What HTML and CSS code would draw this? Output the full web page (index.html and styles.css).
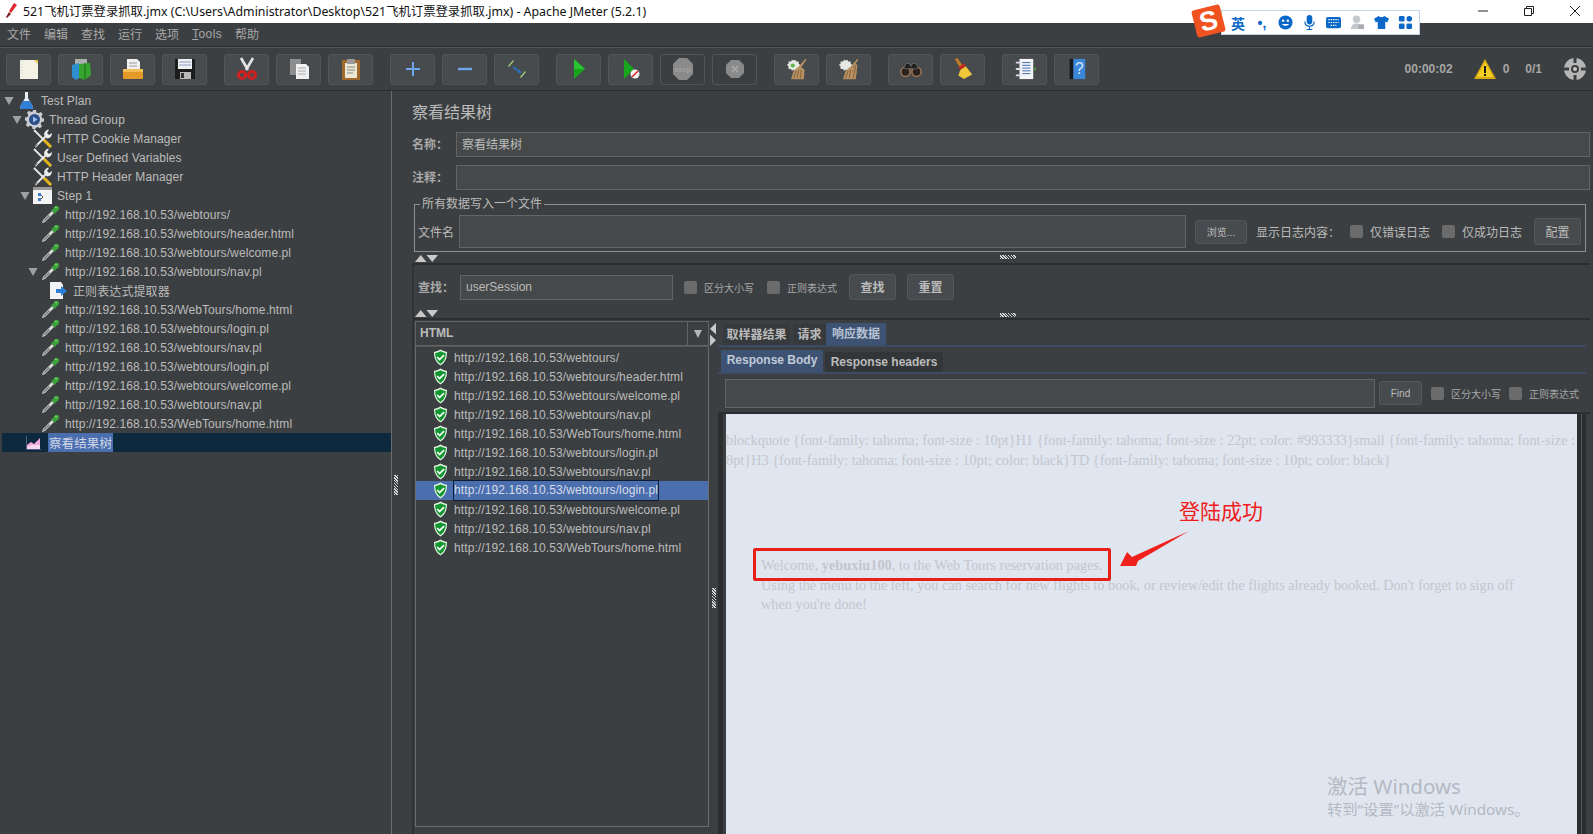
FILE: index.html
```html
<!DOCTYPE html>
<html lang="zh-CN">

<head>
    <meta charset="UTF-8">
    <title>521飞机订票登录抓取.jmx - Apache JMeter (5.2.1)</title>
    <link rel="stylesheet" href="styles.css">
</head>

<body>
    <!-- icons used more than once -->
    <svg class="sprite" aria-hidden="true">
        <symbol id="i-flask" viewBox="0 0 19 19"><path d="M8 1h3v6l5 9q.5 2-1.500 2h-10q-2 0-1.500-2l5-9z" fill="#e8eef5"/><path d="M6 10h7l3 6q.5 2-1.500 2h-10q-2 0-1.500-2z" fill="#2f7fd8"/></symbol>
        <symbol id="i-gear" viewBox="0 0 19 19"><path d="M8 0h3l.5 2.500 2 .8L15.700 2l2 2-1.300 2.200.8 2L19 8.500v3l-2.500.5-.8 2 1.300 2.200-2 2-2.200-1.300-2 .8L10.500 19h-3L7 16.500l-2-.8L2.800 17l-2-2 1.300-2.200-.8-2L0 10.500v-3l2.500-.5.8-2L2 2.800l2-2 2 1.300 2-.8z" fill="#c9ccd2"/><circle cx="9.500" cy="9.500" r="5.500" fill="#2c4f88"/><path d="M8 6.500l4.500 3-4.500 3z" fill="#9cc0ee"/></symbol>
        <symbol id="i-tool" viewBox="0 0 19 19"><path d="M1 1l17 17" stroke="#e8e8e8" stroke-width="1.800"/><path d="M2 18L13 7" stroke="#e8e8e8" stroke-width="2"/><path d="M11 6q0-4 4-5.500l1 .5-2 3 2 2 3-2q0 5-5 5.500z" fill="#ececec"/><path d="M11 11l7 7" stroke="#e2b318" stroke-width="3"/><path d="M1 18.500l3-3" stroke="#111" stroke-width="1"/></symbol>
        <symbol id="i-step" viewBox="0 0 19 19"><rect width="19" height="17" y="1" fill="#f4f4f4"/><rect width="19" height="3" y="1" fill="#9a9a9a"/><path d="M5 7h3v3H5zM5 12h3v3H5z" fill="#3e7cc8"/><path d="M8 9l2 2-2 2" stroke="#555" fill="none"/></symbol>
        <symbol id="i-pipette" viewBox="0 0 19 19"><path d="M1 18l1-3L11 6l2 2-9 9z" fill="#d8dcd8"/><path d="M2 17l1-2 5-5 1 1-5 5z" fill="#777"/><path d="M10 5l2-1 1-2q3-2 4.500-.5T17 6l-2 1-1 2z" fill="#3aa33a"/><path d="M14 2l2 1" stroke="#a6e08a"/></symbol>
        <symbol id="i-regex" viewBox="0 0 19 19"><path d="M1 1h11l2 3v14H1z" fill="#f3f3f3"/><path d="M12 5l6 5-6 5v-3H7V8h5z" fill="#2d7fd6"/></symbol>
        <symbol id="i-chart" viewBox="0 0 16 14"><path d="M1 0v14h15v-1H2V0z" fill="#555c88"/><path d="M2 13V9l4-3 3 2 6-6v11z" fill="#f0a8dc"/><path d="M2 13v-2l5-2 8 0v4z" fill="#f7d8f0"/></symbol>
        <symbol id="i-shield" viewBox="0 0 16 17"><path d="M8 0q3 2 7 2.500 0 10.500-7 14.500Q1 13 1 2.500 5 2 8 0z" fill="#e6f5e4"/><path d="M8 1.700q3 1.500 5.700 2Q13.500 12 8 15.400 2.500 12 2.300 3.700 5 3.200 8 1.700z" fill="#12962f"/><path d="M4.500 8l2.500 2.700L11.800 6" stroke="#fff" stroke-width="1.800" fill="none"/></symbol>
        <symbol id="i-broom" viewBox="0 0 26 26"><path d="M7 2l2 1 2-1 1 2 3 0 0 3 2 1-1 2 0 3-3 0-1 2-3-1-2 1-1-2-3 0 0-3-2-2 2-1 0-3 3 0z" fill="#e6e8e6"/><path d="M23 1l1 1-6 9 4 3-1 11H6l3-10 6-5z" fill="#b89062"/><path d="M9 24l3-9M13 24l2-10M17 24l1-10" stroke="#7c5c38"/></symbol>
    </svg>

    <div class="titlebar">
        <svg class="title-icon" viewBox="0 0 14 16"><path d="M9 0l3 2-6 8-2-2z" fill="#e0282e"/><path d="M4 9l2 2-4 4-1-1z" fill="#7c1c20"/></svg>
        <span class="title-text">521飞机订票登录抓取.jmx (C:\Users\Administrator\Desktop\521飞机订票登录抓取.jmx) - Apache JMeter (5.2.1)</span>
        <div class="window-buttons">
            <svg viewBox="0 0 12 12"><path d="M1 6h10" stroke="#222" fill="none"/></svg>
            <svg viewBox="0 0 12 12"><path d="M1.500 3.500h7v7h-7zM3.500 3.500v-2h7v7h-2" stroke="#222" fill="none"/></svg>
            <svg viewBox="0 0 12 12"><path d="M1 1l10 10M11 1L1 11" stroke="#222" fill="none"/></svg>
        </div>
    </div>

    <div class="menubar">
        <span>文件</span><span>编辑</span><span>查找</span><span>运行</span><span>选项</span><span class="menu-latin"><u>T</u>ools</span><span>帮助</span>
    </div>

    <div class="toolbar">
        <div class="tool-group">
            <button class="tool"><svg viewBox="0 0 22 24"><path d="M2 3h15l3 3v16H2z" fill="#f4f2e4"/><path d="M16 3h4v4z" fill="#e8c84a"/><path d="M4 4v17" stroke="#ccc" stroke-dasharray="1 2"/></svg></button>
            <button class="tool"><svg viewBox="0 0 22 24"><path d="M5 2h12v6H5z" fill="#aab2b0"/><path d="M2 8l7-2v15l-3 2-4-3z" fill="#2d8fd0"/><path d="M9 7l11-1 1 12-6 5-6-2z" fill="#35a52f"/><path d="M15 6v17" stroke="#1d6c1a"/></svg></button>
            <button class="tool"><svg viewBox="0 0 22 24"><path d="M5 2h10l3 3v9H5z" fill="#f2f2f2"/><path d="M7 6h8M7 9h8" stroke="#999"/><path d="M1 12h20v9q0 1-1 1H2q-1 0-1-1z" fill="#e39a28"/><path d="M1 12h20v3H1z" fill="#f3bd55"/></svg></button>
            <button class="tool"><svg viewBox="0 0 22 24"><path d="M1 2h20v20H1z" fill="#1c1c1c"/><path d="M4 2h14v10H4z" fill="#eef0f2"/><path d="M5 5h12M5 8h12" stroke="#8aa0c0"/><path d="M6 15h11v7H6z" fill="#b8b8b8"/><path d="M7 16h3v5H7z" fill="#333"/></svg></button>
        </div>
        <div class="tool-group">
            <button class="tool"><svg viewBox="0 0 22 24"><path d="M5 1l7 12M17 1l-7 12" stroke="#e4e4e4" stroke-width="2.600"/><circle cx="6" cy="18" r="3.500" fill="none" stroke="#d02020" stroke-width="3"/><circle cx="16" cy="18" r="3.500" fill="none" stroke="#d02020" stroke-width="3"/></svg></button>
            <button class="tool"><svg viewBox="0 0 22 24"><path d="M2 2h11v16H2z" fill="#8e8e8e"/><path d="M8 7h10l3 3v12H8z" fill="#f0f0f0"/><path d="M10 11h8M10 14h8M10 17h8" stroke="#aaa"/></svg></button>
            <button class="tool"><svg viewBox="0 0 22 24"><path d="M2 3h18v20H2z" fill="#a0682a"/><path d="M5 6h12v15H5z" fill="#ece6d4"/><path d="M7 2h8v5H7z" fill="#999"/><path d="M7 10h8M7 13h8M7 16h6" stroke="#888"/></svg></button>
        </div>
        <div class="tool-group">
            <button class="tool"><svg viewBox="0 0 22 24"><path d="M11 5v14M4 12h14" stroke="#6ca6ec" stroke-width="2"/></svg></button>
            <button class="tool"><svg viewBox="0 0 22 24"><path d="M4 12h14" stroke="#6ca6ec" stroke-width="2.400"/></svg></button>
            <button class="tool"><svg viewBox="0 0 22 24"><path d="M2 9l5-6 1 1-5 6zM14 20l5-6 1 1-5 6z" fill="#9ccb7a"/><path d="M7 10l7 5" stroke="#2c6fbf" stroke-width="2"/><path d="M13 12l3 4-4 0z" fill="#2c6fbf"/></svg></button>
        </div>
        <div class="tool-group">
            <button class="tool"><svg viewBox="0 0 22 24"><path d="M6 2l11 10L6 22z" fill="#17a51c"/><path d="M6 2l11 10H6z" fill="#28c430"/></svg></button>
            <button class="tool"><svg viewBox="0 0 22 24"><path d="M4 2l10 10L4 22z" fill="#17a51c"/><circle cx="15" cy="17" r="4.500" fill="#f2f2f2"/><path d="M12 20l6-6" stroke="#d82828" stroke-width="1.600"/></svg></button>
            <button class="tool off"><svg viewBox="0 0 22 24"><path d="M7 1h8l6 6v10l-6 6H7l-6-6V7z" fill="#8a8a8a"/><text x="11" y="15" class="stop-text">stop</text></svg></button>
            <button class="tool off"><svg viewBox="0 0 22 24"><path d="M7 3h8l5 5v8l-5 5H7l-5-5V8z" fill="#8a8a8a"/><path d="M8 9l6 6M14 9l-6 6" stroke="#a4a4a4" stroke-width="2"/></svg></button>
        </div>
        <div class="tool-group">
            <button class="tool"><svg viewBox="0 0 26 26"><use href="#i-broom"/><circle cx="8" cy="9" r="2.500" fill="#5fb84c"/></svg></button>
            <button class="tool"><svg viewBox="0 0 26 26"><use href="#i-broom"/><path d="M15 24l5-17 3 1-2 16z" fill="#b89062"/><path d="M18 24l3-15" stroke="#7c5c38"/></svg></button>
        </div>
        <div class="tool-group">
            <button class="tool"><svg viewBox="0 0 24 24"><circle cx="6" cy="15" r="5" fill="#2a2320" stroke="#a87c58" stroke-width="1.500"/><circle cx="18" cy="15" r="5" fill="#2a2320" stroke="#a87c58" stroke-width="1.500"/><path d="M4 11l3-5h3l2 3 2-3h3l3 5-5 1-3-1-3 1z" fill="#1f1f1f" stroke="#888" stroke-width=".6"/></svg></button>
            <button class="tool"><svg viewBox="0 0 24 24"><path d="M3 1l3-1 6 9-3 2z" fill="#c47a26"/><path d="M7 10l6-4 2 3-6 4z" fill="#c42a20"/><path d="M9 13l6-4 7 9-9 5-6-4z" fill="#eec73a"/></svg></button>
        </div>
        <div class="tool-group">
            <button class="tool"><svg viewBox="0 0 24 24"><path d="M6 1h15v22H6z" fill="#f2f4f8"/><path d="M9 5h9M9 8h9M9 11h9M9 14h9M9 17h9" stroke="#3565a8"/><path d="M2 4h6v2H2zM2 11h6v2H2zM2 18h6v2H2z" fill="#dde"/><path d="M21 12l3-2v4z" fill="#4a9e3a"/></svg></button>
            <button class="tool"><svg viewBox="0 0 24 24"><path d="M4 1h4v22H4z" fill="#15181d"/><path d="M8 1h13v22H8z" fill="#3a86d8"/><text x="14.500" y="17" class="help-text">?</text></svg></button>
        </div>
        <div class="run-status">
            <span class="timer">00:00:02</span>
            <svg class="warn" viewBox="0 0 22 20"><path d="M11 0l11 20H0z" fill="#d8aa12"/><path d="M11 3l8 15H3z" fill="#f5cf25"/><path d="M10 7h2v7h-2zM10 15h2v2h-2z" fill="#1a1a1a"/></svg>
            <span class="warn-count">0</span>
            <span class="threads">0/1</span>
            <svg class="globe" viewBox="0 0 22 22"><circle cx="11" cy="11" r="11" fill="#b5b5b5"/><circle cx="11" cy="11" r="4" fill="#3c3f41"/><path d="M11 0v5M11 17v5M0 11h5M17 11h5" stroke="#3c3f41" stroke-width="3"/><circle cx="11" cy="11" r="2" fill="#c8c8c8"/></svg>
        </div>
    </div>

    <div class="main">
        <div class="tree">
            <div class="tree-row lvl0"><i class="twist"></i><svg class="tree-ico"><use href="#i-flask"/></svg><span>Test Plan</span></div>
            <div class="tree-row lvl1"><i class="twist"></i><svg class="tree-ico"><use href="#i-gear"/></svg><span>Thread Group</span></div>
            <div class="tree-row lvl2"><i class="twist none"></i><svg class="tree-ico"><use href="#i-tool"/></svg><span>HTTP Cookie Manager</span></div>
            <div class="tree-row lvl2"><i class="twist none"></i><svg class="tree-ico"><use href="#i-tool"/></svg><span>User Defined Variables</span></div>
            <div class="tree-row lvl2"><i class="twist none"></i><svg class="tree-ico"><use href="#i-tool"/></svg><span>HTTP Header Manager</span></div>
            <div class="tree-row lvl2"><i class="twist"></i><svg class="tree-ico"><use href="#i-step"/></svg><span>Step 1</span></div>
            <div class="tree-row lvl3"><i class="twist none"></i><svg class="tree-ico"><use href="#i-pipette"/></svg><span>http://192.168.10.53/webtours/</span></div>
            <div class="tree-row lvl3"><i class="twist none"></i><svg class="tree-ico"><use href="#i-pipette"/></svg><span>http://192.168.10.53/webtours/header.html</span></div>
            <div class="tree-row lvl3"><i class="twist none"></i><svg class="tree-ico"><use href="#i-pipette"/></svg><span>http://192.168.10.53/webtours/welcome.pl</span></div>
            <div class="tree-row lvl3"><i class="twist"></i><svg class="tree-ico"><use href="#i-pipette"/></svg><span>http://192.168.10.53/webtours/nav.pl</span></div>
            <div class="tree-row lvl4"><i class="twist none"></i><svg class="tree-ico"><use href="#i-regex"/></svg><span>正则表达式提取器</span></div>
            <div class="tree-row lvl3"><i class="twist none"></i><svg class="tree-ico"><use href="#i-pipette"/></svg><span>http://192.168.10.53/WebTours/home.html</span></div>
            <div class="tree-row lvl3"><i class="twist none"></i><svg class="tree-ico"><use href="#i-pipette"/></svg><span>http://192.168.10.53/webtours/login.pl</span></div>
            <div class="tree-row lvl3"><i class="twist none"></i><svg class="tree-ico"><use href="#i-pipette"/></svg><span>http://192.168.10.53/webtours/nav.pl</span></div>
            <div class="tree-row lvl3"><i class="twist none"></i><svg class="tree-ico"><use href="#i-pipette"/></svg><span>http://192.168.10.53/webtours/login.pl</span></div>
            <div class="tree-row lvl3"><i class="twist none"></i><svg class="tree-ico"><use href="#i-pipette"/></svg><span>http://192.168.10.53/webtours/welcome.pl</span></div>
            <div class="tree-row lvl3"><i class="twist none"></i><svg class="tree-ico"><use href="#i-pipette"/></svg><span>http://192.168.10.53/webtours/nav.pl</span></div>
            <div class="tree-row lvl3"><i class="twist none"></i><svg class="tree-ico"><use href="#i-pipette"/></svg><span>http://192.168.10.53/WebTours/home.html</span></div>
            <div class="tree-row lvl1 selected"><i class="twist none"></i><svg class="tree-ico small"><use href="#i-chart"/></svg><span>察看结果树</span></div>
        </div>

        <div class="v-split"><i class="grip-v"></i></div>

        <div class="panel">
            <div class="view-title">察看结果树</div>
            <div class="field-row"><label>名称：</label><div class="input">察看结果树</div></div>
            <div class="field-row"><label>注释：</label><div class="input"></div></div>

            <fieldset class="file-group">
                <legend>所有数据写入一个文件</legend>
                <div class="file-row">
                    <span class="file-label">文件名</span>
                    <div class="input file-input"></div>
                    <button class="btn browse">浏览...</button>
                    <span class="log-label">显示日志内容：</span>
                    <span class="check"></span><span class="log-opt">仅错误日志</span>
                    <span class="check"></span><span class="log-opt">仅成功日志</span>
                    <button class="btn config">配置</button>
                </div>
            </fieldset>

            <div class="h-split"><i class="arrows"></i><i class="grip-h"></i></div>

            <div class="lower">
                <div class="search-row">
                    <span class="search-label">查找：</span>
                    <div class="input search-input">userSession</div>
                    <span class="check"></span><span class="small-opt">区分大小写</span>
                    <span class="check"></span><span class="small-opt">正则表达式</span>
                    <button class="btn search-btn">查找</button>
                    <button class="btn search-btn">重置</button>
                </div>
                <div class="h-split second"><i class="arrows"></i><i class="grip-h"></i></div>

                <div class="results">
                    <div class="result-col">
                        <div class="combo"><span>HTML</span><i class="combo-arrow"></i></div>
                        <div class="result-list">
                            <div class="result-row"><svg class="shield"><use href="#i-shield"/></svg><span>http://192.168.10.53/webtours/</span></div>
                            <div class="result-row"><svg class="shield"><use href="#i-shield"/></svg><span>http://192.168.10.53/webtours/header.html</span></div>
                            <div class="result-row"><svg class="shield"><use href="#i-shield"/></svg><span>http://192.168.10.53/webtours/welcome.pl</span></div>
                            <div class="result-row"><svg class="shield"><use href="#i-shield"/></svg><span>http://192.168.10.53/webtours/nav.pl</span></div>
                            <div class="result-row"><svg class="shield"><use href="#i-shield"/></svg><span>http://192.168.10.53/WebTours/home.html</span></div>
                            <div class="result-row"><svg class="shield"><use href="#i-shield"/></svg><span>http://192.168.10.53/webtours/login.pl</span></div>
                            <div class="result-row"><svg class="shield"><use href="#i-shield"/></svg><span>http://192.168.10.53/webtours/nav.pl</span></div>
                            <div class="result-row selected"><svg class="shield"><use href="#i-shield"/></svg><span>http://192.168.10.53/webtours/login.pl</span></div>
                            <div class="result-row"><svg class="shield"><use href="#i-shield"/></svg><span>http://192.168.10.53/webtours/welcome.pl</span></div>
                            <div class="result-row"><svg class="shield"><use href="#i-shield"/></svg><span>http://192.168.10.53/webtours/nav.pl</span></div>
                            <div class="result-row"><svg class="shield"><use href="#i-shield"/></svg><span>http://192.168.10.53/WebTours/home.html</span></div>
                        </div>
                    </div>

                    <div class="col-split"><i class="col-arrows"></i><i class="grip-v"></i></div>

                    <div class="detail">
                        <div class="tabs">
                            <span class="tab sampler">取样器结果</span>
                            <span class="tab">请求</span>
                            <span class="tab active">响应数据</span>
                        </div>
                        <div class="subtabs">
                            <span class="subtab active">Response Body</span>
                            <span class="subtab">Response headers</span>
                        </div>
                        <div class="body-search">
                            <div class="input body-input"></div>
                            <button class="btn find">Find</button>
                            <span class="check"></span><span class="small-opt">区分大小写</span>
                            <span class="check"></span><span class="small-opt">正则表达式</span>
                        </div>
                        <div class="response">
                            <p>blockquote {font-family: tahoma; font-size : 10pt}H1 {font-family: tahoma; font-size : 22pt; color: #993333}small {font-family: tahoma; font-size : 8pt}H3 {font-family: tahoma; font-size : 10pt; color: black}TD {font-family: tahoma; font-size : 10pt; color: black}</p>
                            <p class="welcome">Welcome, <b>yebuxiu100</b>, to the Web Tours reservation pages.<br>Using the menu to the left, you can search for new flights to book, or review/edit the flights already booked. Don't forget to sign off when you're done!</p>
                            <div class="red-box"></div>
                            <span class="note">登陆成功</span>
                            <svg class="note-arrow" viewBox="0 0 69 35"><path d="M69 0L18 30l-2 5H0l7-14 5 5z" fill="#f0201c"/></svg>
                            <div class="activate">
                                <div class="activate-big">激活 Windows</div>
                                <div class="activate-small">转到“设置”以激活 Windows。</div>
                            </div>
                        </div>
                    </div>
                </div>
            </div>
        </div>
    </div>

    <!-- input method bar floating over the window -->
    <div class="sogou">
        <span class="sogou-logo"><b>S</b></span>
        <div class="sogou-bar">
            <span class="sogou-lang">英</span>
            <span class="sogou-punct">•,</span>
            <svg viewBox="0 0 16 16"><circle cx="8" cy="8" r="7.500" fill="#0a68c8"/><circle cx="5.500" cy="6" r="1.300" fill="#fff"/><circle cx="10.500" cy="6" r="1.300" fill="#fff"/><path d="M4 9.500q4 4 8 0z" fill="#fff"/></svg>
            <svg viewBox="0 0 16 16"><rect x="5" y="0" width="6" height="10" rx="3" fill="#0a68c8"/><path d="M3 7q0 5 5 5t5-5M8 12v3M5 15.500h6" fill="none" stroke="#0a68c8" stroke-width="1.200"/></svg>
            <svg viewBox="0 0 16 16"><rect y="2" width="16" height="12" rx="2" fill="#0a68c8"/><path d="M2.500 5h11M2.500 8h11M5 11h6" stroke="#fff" stroke-width="1.300" stroke-dasharray="1.500 1"/></svg>
            <svg viewBox="0 0 16 16"><circle cx="7" cy="4.500" r="4" fill="#c4c8cc"/><path d="M1 15q0-6 6-6t6 6z" fill="#c4c8cc"/><rect x="9" y="10" width="6" height="5" fill="#a8acb0"/></svg>
            <svg viewBox="0 0 16 16"><path d="M5 1L0 4l2 4 2-1v8h8V7l2 1 2-4-5-3q-3 3-6 0z" fill="#0a68c8"/></svg>
            <svg viewBox="0 0 16 16"><rect x="1" y="1" width="6" height="6" rx="1.500" fill="#0a68c8"/><rect x="9" y="1" width="6" height="6" rx="3" fill="#0a68c8"/><rect x="1" y="9" width="6" height="6" rx="1.500" fill="#0a68c8"/><rect x="9" y="9" width="6" height="6" rx="1.500" fill="#0a68c8"/></svg>
        </div>
    </div>
</body>

</html>
```

FILE: styles.css
```css
/* JMeter dark window */
* {
    box-sizing: border-box;
}

body {
    margin: 0;
    width: 1593px;
    height: 834px;
    overflow: hidden;
    background-color: #3c3f41;
    color: #bbbbbb;
    font-family: "Liberation Sans", "Noto Sans CJK SC", sans-serif;
    font-size: 12px;
}

button {
    font-family: inherit;
    padding: 0;
}

.sprite {
    position: absolute;
    width: 0;
    height: 0;
}

/* title + menu */
.titlebar {
    height: 23px;
    background-color: #fff;
    color: #111;
    display: flex;
    align-items: center;
    padding: 0 0 2px 5px;
    font-family: "Noto Sans", "Noto Sans CJK SC", sans-serif;
    font-size: 12.35px;
}

.title-icon {
    width: 14px;
    height: 16px;
    margin-right: 4px;
}

.window-buttons {
    margin-left: auto;
    display: flex;
    gap: 34px;
    padding-right: 12px;
}

.window-buttons svg {
    width: 12px;
    height: 12px;
}

.menubar {
    height: 24px;
    display: flex;
    align-items: center;
    gap: 13px;
    padding: 0 0 2px 7px;
    border-bottom: 1px solid #2b2b2b;
    color: #a8a8a8;
}

.menu-latin {
    letter-spacing: 0.4px;
}

.toolbar {
    height: 44px;
    display: flex;
    align-items: center;
    gap: 17px;
    padding: 0 7px 0 6px;
    border-top: 1px solid #555759;
    border-bottom: 1px solid #2b2b2b;
}

.tool-group {
    display: flex;
    gap: 7px;
}

.tool {
    width: 45px;
    height: 31px;
    background-color: #484b4d;
    border: 1px solid #525558;
    border-radius: 3px;
    display: flex;
    align-items: center;
    justify-content: center;
}

.tool.off {
    background-color: #3c3f41;
}

.tool svg {
    width: 22px;
    height: 24px;
}

.stop-text {
    font-size: 8px;
    font-weight: bold;
    fill: #a0a0a0;
    text-anchor: middle;
}

.help-text {
    font-size: 17px;
    fill: #dbe8f7;
    text-anchor: middle;
}

.run-status {
    margin-left: auto;
    display: flex;
    align-items: center;
    font-weight: bold;
    color: #a6a6a6;
}

.warn {
    width: 22px;
    height: 20px;
    margin-left: 21px;
}

.warn-count {
    margin-left: 7px;
}

.threads {
    margin-left: 16px;
}

.globe {
    width: 22px;
    height: 22px;
    margin-left: 22px;
}

/* main split */
.main {
    height: 743px;
    display: flex;
}

.tree {
    width: 390px;
    margin-left: 2px;
    border-right: 1px solid #6a6c6e;
    flex-shrink: 0;
}

.tree-row {
    height: 19px;
    display: flex;
    align-items: center;
    letter-spacing: 0.1px;
}

.lvl0 { padding-left: 2px; }
.lvl1 { padding-left: 10px; }
.lvl2 { padding-left: 18px; }
.lvl3 { padding-left: 26px; }
.lvl4 { padding-left: 34px; }

.twist {
    width: 12px;
    height: 9px;
    flex-shrink: 0;
    background-color: #a0a0a0;
    clip-path: polygon(4% 10%, 80% 10%, 42% 100%);
}

.twist.none {
    background: none;
}

.tree-ico {
    width: 19px;
    height: 19px;
    margin-right: 6px;
    flex-shrink: 0;
    overflow: visible;
    transform: translateX(1px);
}

.tree-ico.small {
    height: 14px;
    width: 16px;
    margin-right: 8px;
}

.tree-row.selected {
    background-color: #0d293e;
}

.tree-row.selected span {
    padding: 0 1px;
    font-size: 12.5px;
    background-color: #4b6eaf;
    color: #d0d8e8;
}

.v-split {
    width: 8px;
    flex-shrink: 0;
    display: flex;
    align-items: center;
    justify-content: center;
    padding-top: 44px;
}

.grip-v {
    display: block;
    width: 4px;
    height: 20px;
    background: repeating-linear-gradient(45deg, #d8d8d8 0 1px, #3c3f41 1px 2px);
}

.panel {
    flex: 1;
    min-width: 0;
    padding-right: 3px;
}

.view-title {
    height: 41px;
    padding: 12px 0 0 12px;
    font-size: 16px;
    line-height: 20px;
}

.field-row {
    height: 25px;
    margin-bottom: 8px;
    display: flex;
    align-items: center;
    padding-left: 12px;
}

.field-row label {
    width: 44px;
    flex-shrink: 0;
    padding-bottom: 2px;
    font-weight: bold;
    color: #a8a8a8;
}

.input {
    background-color: #45494a;
    border: 1px solid #646464;
    padding: 0 0 2px 5px;
    height: 100%;
    display: flex;
    align-items: center;
    flex: 1;
}

.file-group {
    margin: -2px 4px 0 14px;
    padding: 0;
    height: 56px;
    border: 1px solid #8d8f90;
    min-width: 0;
}

.file-group legend {
    margin-left: 5px;
    padding: 0 2px;
    line-height: 16px;
}

.file-row {
    height: 33px;
    margin-top: 3px;
    display: flex;
    align-items: center;
    padding: 0 4px 0 3px;
}

.file-label {
    width: 41px;
    flex-shrink: 0;
}

.file-input {
    flex: 1;
}

.btn {
    background-color: #484b4d;
    border: 1px solid #55585a;
    border-radius: 3px;
    color: #bbbbbb;
    font-size: 12px;
    flex-shrink: 0;
}

.browse {
    width: 52px;
    height: 24px;
    margin-left: 9px;
    font-size: 10px;
}

.log-label {
    margin-left: 9px;
    width: 94px;
    flex-shrink: 0;
}

.check {
    width: 13px;
    height: 13px;
    background-color: #6b6b6b;
    border-radius: 2px;
    flex-shrink: 0;
}

.log-opt {
    width: 79px;
    flex-shrink: 0;
    padding-left: 7px;
}

.config {
    width: 47px;
    height: 27px;
}

.h-split {
    height: 11px;
    position: relative;
    display: flex;
    align-items: center;
    justify-content: center;
    padding-left: 26px;
}

.arrows {
    position: absolute;
    left: 15px;
    top: 3px;
    width: 23px;
    height: 7px;
    background-color: #c8c8c8;
    clip-path: polygon(0 100%, 25% 0, 50% 100%, 50% 0, 100% 0, 75% 100%, 50% 0, 50% 100%);
}

.grip-h {
    display: block;
    width: 16px;
    height: 4px;
    margin-top: -1px;
    background: repeating-linear-gradient(45deg, #d8d8d8 0 1px, #3c3f41 1px 2px);
}

.lower {
    margin-left: 12px;
    border-top: 2px solid #2b2d2e;
    border-left: 2px solid #303234;
    height: 571px;
}

.search-row {
    height: 44px;
    display: flex;
    align-items: center;
    padding-left: 4px;
}

.search-label {
    width: 42px;
    flex-shrink: 0;
    padding-bottom: 2px;
    font-weight: bold;
    color: #a8a8a8;
}

.search-input {
    flex: 0 0 213px;
    height: 25px;
    margin-right: 11px;
    padding-bottom: 0;
}

.small-opt {
    width: 70px;
    padding-left: 7px;
    font-size: 10px;
    flex-shrink: 0;
    color: #a8a8a8;
}

.search-btn {
    width: 47px;
    height: 26px;
    padding-bottom: 2px;
    font-weight: bold;
    margin-right: 11px;
}

.small-opt + .search-btn {
    margin-left: -1px;
}

.h-split.second {
    height: 9px;
    margin-left: -14px;
}

.h-split.second .arrows {
    top: 1px;
}

.h-split.second .grip-h {
    margin-top: 3px;
}

.results {
    height: 516px;
    display: flex;
    border-top: 2px solid #2b2d2e;
    padding: 1px 0 0 1px;
}

.result-col {
    width: 294px;
    flex-shrink: 0;
}

.combo {
    height: 25px;
    border: 1px solid #646464;
    background-color: #3c3f41;
    display: flex;
    align-items: center;
    padding: 0 0 2px 4px;
    font-weight: bold;
    position: relative;
}

.combo-arrow {
    position: absolute;
    right: 0;
    top: 0;
    width: 21px;
    height: 23px;
    border-left: 1px solid #646464;
}

.combo-arrow::after {
    content: "";
    position: absolute;
    left: 6px;
    top: 8px;
    border-left: 4px solid transparent;
    border-right: 4px solid transparent;
    border-top: 8px solid #b5b5b5;
}

.result-list {
    height: 481px;
    border: 1px solid #6a6c6e;
    border-top-color: #555;
    padding-top: 1px;
}

.result-row {
    height: 19px;
    display: flex;
    align-items: center;
    padding-left: 17px;
    letter-spacing: 0.1px;
}

.shield {
    width: 15px;
    height: 17px;
    margin-right: 6px;
    flex-shrink: 0;
}

.result-row.selected {
    background-color: #4b6eaf;
}

.result-row.selected span {
    outline: 1px solid #0d1b33;
    line-height: 19px;
    color: #d5dce8;
}

.col-split {
    width: 9px;
    flex-shrink: 0;
    position: relative;
    display: flex;
    align-items: center;
    justify-content: center;
    padding-top: 40px;
}

.col-arrows {
    position: absolute;
    left: 1px;
    top: 2px;
    width: 6px;
    height: 23px;
    background-color: #c8c8c8;
    clip-path: polygon(100% 0, 0 25%, 100% 50%, 0 50%, 0 100%, 100% 75%, 0 50%, 100% 50%);
}

.detail {
    flex: 1;
    min-width: 0;
}

.tabs {
    height: 26px;
    padding-left: 5px;
    display: flex;
    align-items: flex-end;
    gap: 3px;
    border-bottom: 2px solid #3d4b66;
    margin-right: 4px;
}

.tab {
    width: 33px;
    height: 21px;
    padding-bottom: 2px;
    background-color: #373a3c;
    display: flex;
    align-items: center;
    justify-content: center;
    font-weight: bold;
}

.tab.sampler {
    width: 67px;
}

.tab.active {
    margin-left: -3px;
    width: 60px;
    height: 22px;
    padding-bottom: 4px;
    background-color: #3e5373;
    color: #b8c4d4;
}

.subtabs {
    height: 27px;
    padding-left: 3px;
    display: flex;
    align-items: flex-end;
    gap: 2px;
    border-bottom: 2px solid #3d4b66;
    margin-right: 4px;
}

.subtab {
    height: 20px;
    width: 118px;
    display: flex;
    align-items: center;
    justify-content: center;
    background-color: #333638;
    font-weight: bold;
}

.subtab.active {
    height: 22px;
    width: 102px;
    padding-bottom: 2px;
    background-color: #3e5373;
    color: #c0cad8;
}

.body-search {
    height: 40px;
    padding-left: 7px;
    display: flex;
    align-items: center;
    border-bottom: 2px solid #2b2d2e;
}

.body-input {
    flex: 0 0 650px;
    height: 29px;
}

.find {
    width: 43px;
    height: 24px;
    margin: 0 9px 0 4px;
    font-size: 10px;
}

.body-search .small-opt {
    width: 65px;
}

.response {
    position: relative;
    width: 851px;
    height: 430px;
    margin-left: 8px;
    background-color: #e0e6f0;
    padding-top: 17px;
    color: #c2c6cd;
    font-family: "Liberation Serif", "Noto Sans CJK SC", serif;
    font-size: 14.3px;
    line-height: 19.5px;
    box-shadow: -3px 0 0 #3c3f41, -8px 0 0 #2b2d2e, 4px 0 0 #2b2d2e, 5px 0 0 #55585a, 9px 0 0 #2b2d2e;
}

.response p {
    margin: 0;
}

.response p.welcome {
    margin: 86px 46px 0 35px;
}

.red-box {
    position: absolute;
    left: 27px;
    top: 134px;
    width: 358px;
    height: 33px;
    border: 3px solid #e8201a;
    border-radius: 2px;
}

.note {
    position: absolute;
    left: 453px;
    top: 82px;
    color: #ee1c1c;
    font-family: "Noto Sans CJK SC", sans-serif;
    font-size: 21px;
    line-height: 28px;
}

.note-arrow {
    position: absolute;
    left: 394px;
    top: 117px;
    width: 69px;
    height: 35px;
}

.activate {
    position: absolute;
    left: 601px;
    top: 359px;
    color: #b4b9c2;
    font-family: "Noto Sans", "Noto Sans CJK SC", sans-serif;
}

.activate-big {
    font-size: 20.5px;
    line-height: 26px;
}

.activate-small {
    font-size: 15.3px;
    line-height: 21px;
}

/* sogou bar */
.sogou {
    position: absolute;
    left: 1194px;
    top: 7px;
    display: flex;
    align-items: flex-end;
}

.sogou-logo {
    width: 29px;
    height: 28px;
    background-color: #f0531f;
    border-radius: 3px;
    transform: rotate(-14deg);
    color: #fff;
    display: flex;
    align-items: center;
    justify-content: center;
    font-family: "Liberation Sans", sans-serif;
    font-size: 27px;
    position: relative;
    z-index: 1;
}

.sogou-bar {
    height: 25px;
    width: 199px;
    margin-left: -2px;
    background-color: #fff;
    border: 1px solid #c0d4e8;
    display: flex;
    align-items: center;
    gap: 9px;
    padding-left: 9px;
    color: #0a68c8;
}

.sogou-bar svg {
    width: 15px;
    height: 15px;
    flex-shrink: 0;
}

.sogou-lang {
    font-size: 14px;
    font-weight: bold;
    width: 15px;
}

.sogou-punct {
    font-weight: bold;
    font-size: 14px;
    width: 14px;
    text-align: center;
}
```
